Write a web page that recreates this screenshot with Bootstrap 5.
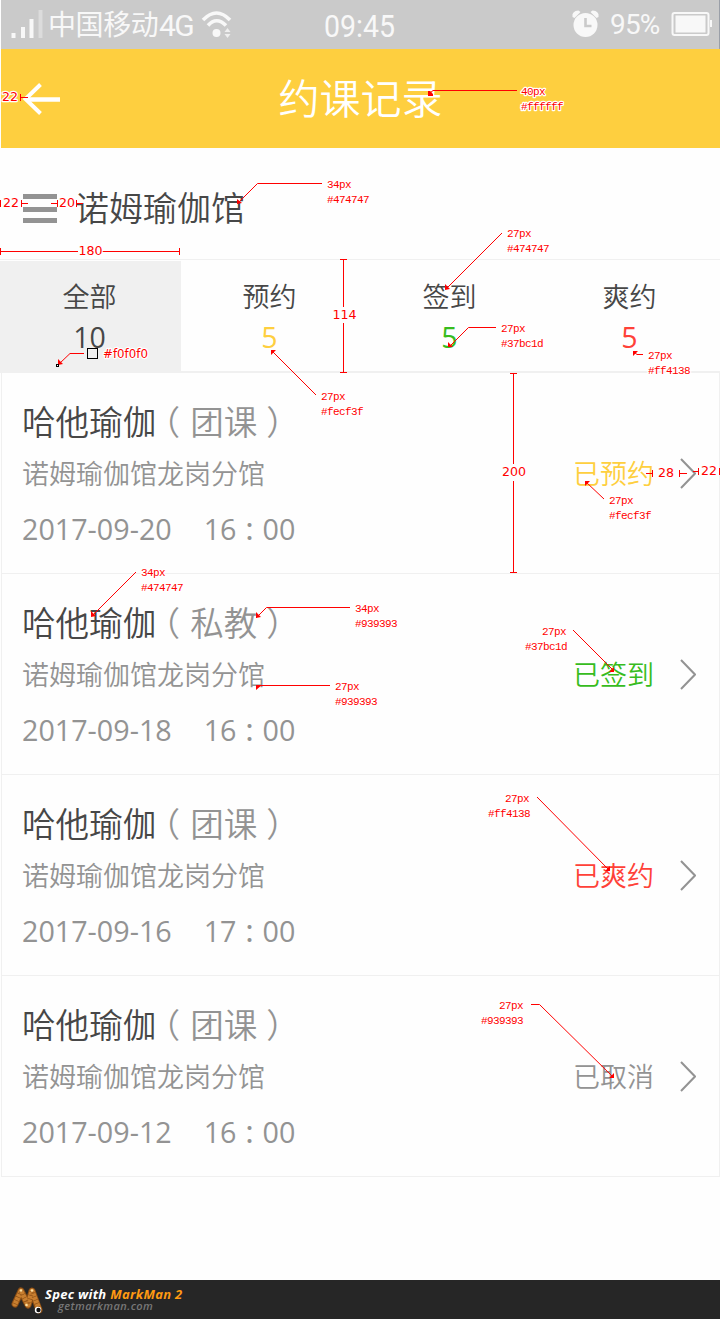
<!DOCTYPE html>
<html lang="zh-CN">
<head>
<meta charset="utf-8">
<meta name="viewport" content="width=device-width, initial-scale=1">
<title>约课记录</title>
<link href="https://cdn.jsdelivr.net/npm/bootstrap@5.3.0/dist/css/bootstrap.min.css" rel="stylesheet">
<style>
body{font-family:"Open Sans","Noto Sans CJK SC",sans-serif;font-weight:350;color:#474747;background:#fefefe;width:720px;height:1319px;overflow:hidden}
.screen{height:1319px}
.statusbar{height:49px;background:#cacaca;color:#f8f8f8;margin-left:1px;border-right:1px solid #9a9fa8;font-family:Roboto,"Noto Sans CJK SC",sans-serif;font-weight:400}
.statusbar svg{display:block;flex:none}
.carrier{font-size:28px;line-height:51px;width:111px;letter-spacing:-.4px;white-space:nowrap}
.net{font-size:30px;line-height:51px;width:40px;letter-spacing:-1.6px}
.clock{font-size:31px;line-height:53px;transform:scaleX(.92);transform-origin:0 0;width:80px}
.batt{font-size:28px;line-height:49px;width:60px;letter-spacing:-.8px}
.titlebar{height:99px;background:#fecf3f;color:#fff;margin-left:1px}
.titlebar h1{font-size:41px;line-height:99px;font-weight:350;flex:1;text-align:center;padding-right:60px}
.store{height:111px;padding:11px 0 0 23px}
.store h2{font-size:34px;line-height:98px;font-weight:350;margin:0 0 2px 18px}
.bars{width:34px;margin-bottom:2px}
.bars i{display:block;height:5px;background:#939393}
.bars i:last-child{margin-top:-2px}
.tabs{height:114px;border-top:1px solid #f0f0f0;border-bottom:2px solid #f0f0f0;padding-top:1px}
.tab-item{padding:16px 1px 0 0;text-align:center;font-size:27px;line-height:40px}
.tab-item.on{background:#f0f0f0;box-shadow:1px 0 #f0f0f0}
.tab-item b{display:block;font-size:28.5px;line-height:40px;font-weight:400}
.c-yellow{color:#fecf3f}.c-green{color:#37bc1d}.c-red{color:#ff4138}.c-gray{color:#939393}
.records{margin-left:1px;border-left:1px solid #f0f0f0;border-right:1px solid #f0f0f0}
.record{height:201px;border-bottom:1px solid #f0f0f0;padding:24px 23px 0 20px}
.course{font-size:33.6px;line-height:50px;white-space:nowrap}
.par-l,.par-r{font-feature-settings:"halt"}
.par-l{margin:0 10px 0 7px}.par-r{margin-left:9px}
.branch{font-size:27px;line-height:40px;margin-top:7px;color:#939393}
.when{font-size:28.7px;line-height:40px;margin-top:15px;color:#939393;font-weight:400;gap:32px}
.when em{font:400 26px/1 "Noto Sans CJK TC",sans-serif;vertical-align:-1px}
.state{font-size:27px;line-height:40px;margin-top:81px}
.state svg{margin-left:26px}
.side{margin-top:-24px;height:200px}
.maker{height:39px;margin-top:103px;background:#262626;font-family:"Open Sans",sans-serif;font-style:italic;font-weight:700;padding:0 0 0 11px}
.maker p{font-size:13px;line-height:14px;color:#fff;letter-spacing:.3px}
.maker p span{color:#ff9a12}
.maker small{font-size:11px;line-height:11px;color:#777;margin-left:13px;font-weight:600;letter-spacing:.45px;margin-top:-1px}
.maker-text{padding-top:7px}
.notes{left:0;top:0;pointer-events:none}
.notes text{fill:#f00;paint-order:stroke;stroke:#fff;stroke-width:2.4px;stroke-linejoin:round}
.spec{font:11px "Liberation Mono",monospace;letter-spacing:-.6px}
.size{font:12.6px "DejaVu Sans",sans-serif}
</style>
</head>
<body>
<div class="screen position-relative">
  <div class="statusbar d-flex">
    <svg width="47" height="49" fill="#f8f8f8"><rect x="10.500" y="33" width="4" height="5"/><rect x="20" y="27" width="4" height="11"/><rect x="28.500" y="19" width="4" height="19"/><rect x="37.500" y="10" width="4" height="28" opacity=".4"/></svg>
    <span class="carrier">中国移动</span><span class="net">4G</span>
    <svg width="125" height="49" fill="none" stroke="#f8f8f8" stroke-width="3.600"><path d="M4 20Q17.500 6 31 20M9 25.500Q17.500 16 27 25.500"/><circle cx="17.500" cy="33" r="4" fill="#f8f8f8" stroke="none"/><path d="M25.500 32l3-4 3 4zM25.500 34l3 4 3-4z" fill="#f8f8f8" stroke="none" opacity=".8"/></svg>
    <span class="clock">09:45</span>
    <svg width="206" height="49"><g transform="translate(167.500 0)" fill="#f8f8f8"><path d="M1 17Q0 11 7 10.500L9 12 3 18zM27 17Q28 11 21 10.500L19 12 25 18z"/><circle cx="14" cy="25" r="12"/><path d="M14 18v8h6" fill="none" stroke="#cacaca" stroke-width="2.600"/></g></svg>
    <span class="batt">95%</span>
    <svg width="48" height="49"><rect x="2.500" y="13" width="36" height="22" rx="2" fill="none" stroke="#f8f8f8" stroke-width="2"/><rect x="5.500" y="15.500" width="30" height="17" fill="#f8f8f8"/><path d="M40 20h2v7h-2z" fill="#f8f8f8"/></svg>
  </div>

  <header class="titlebar d-flex">
    <svg width="60" height="99" fill="none" stroke="#fff" stroke-width="4"><path d="M39.500 35.500L24.500 50 39.500 64.500"/><path d="M25 50.500H59" stroke-width="4.600"/></svg>
    <h1 class="m-0">约课记录</h1>
  </header>

  <section class="store d-flex align-items-center">
    <div class="bars d-flex flex-column gap-2"><i></i><i></i><i></i></div>
    <h2>诺姆瑜伽馆</h2>
  </section>

  <nav class="tabs d-flex">
    <div class="tab-item col-3 on">全部<b>10</b></div>
    <div class="tab-item col-3">预约<b class="c-yellow">5</b></div>
    <div class="tab-item col-3">签到<b class="c-green">5</b></div>
    <div class="tab-item col-3">爽约<b class="c-red">5</b></div>
  </nav>

  <main class="records">
    <article class="record d-flex justify-content-between">
      <div><div class="course">哈他瑜伽<span class="c-gray"><span class="par-l">（</span>团课<span class="par-r">）</span></span></div>
        <div class="branch">诺姆瑜伽馆龙岗分馆</div><div class="when d-flex"><span>2017-09-20</span><span>16<em>：</em>00</span></div></div>
      <div class="side d-flex align-items-start"><div class="state c-yellow d-flex align-items-center">已预约<svg width="16" height="32" fill="none" stroke="#939393" stroke-width="2"><path d="M1 1L15 15.500 1 30"/></svg></div></div>
    </article>
    <article class="record d-flex justify-content-between">
      <div><div class="course">哈他瑜伽<span class="c-gray"><span class="par-l">（</span>私教<span class="par-r">）</span></span></div>
        <div class="branch">诺姆瑜伽馆龙岗分馆</div><div class="when d-flex"><span>2017-09-18</span><span>16<em>：</em>00</span></div></div>
      <div class="side d-flex align-items-start"><div class="state c-green d-flex align-items-center">已签到<svg width="16" height="32" fill="none" stroke="#939393" stroke-width="2"><path d="M1 1L15 15.500 1 30"/></svg></div></div>
    </article>
    <article class="record d-flex justify-content-between">
      <div><div class="course">哈他瑜伽<span class="c-gray"><span class="par-l">（</span>团课<span class="par-r">）</span></span></div>
        <div class="branch">诺姆瑜伽馆龙岗分馆</div><div class="when d-flex"><span>2017-09-16</span><span>17<em>：</em>00</span></div></div>
      <div class="side d-flex align-items-start"><div class="state c-red d-flex align-items-center">已爽约<svg width="16" height="32" fill="none" stroke="#939393" stroke-width="2"><path d="M1 1L15 15.500 1 30"/></svg></div></div>
    </article>
    <article class="record d-flex justify-content-between">
      <div><div class="course">哈他瑜伽<span class="c-gray"><span class="par-l">（</span>团课<span class="par-r">）</span></span></div>
        <div class="branch">诺姆瑜伽馆龙岗分馆</div><div class="when d-flex"><span>2017-09-12</span><span>16<em>：</em>00</span></div></div>
      <div class="side d-flex align-items-start"><div class="state c-gray d-flex align-items-center">已取消<svg width="16" height="32" fill="none" stroke="#939393" stroke-width="2"><path d="M1 1L15 15.500 1 30"/></svg></div></div>
    </article>
  </main>

  <footer class="maker d-flex">
    <svg width="34" height="39" fill="none" stroke-linecap="round" stroke-linejoin="round"><path d="M4 24L10 11 17 25 21 11 28 30" stroke="#8a4d14" stroke-width="7"/><path d="M4 24L10 11 17 25 21 11 28 29" stroke="#c87f30" stroke-width="5"/><path d="M4 24L10 11 17 25 21 11 28 29" stroke="#8a4d14" stroke-width="5" stroke-dasharray=".6 3" stroke-linecap="butt"/><circle cx="10" cy="10.500" r="1.300" fill="#ffe0a0"/><circle cx="21" cy="10.500" r="1.300" fill="#ffe0a0"/><circle cx="15.500" cy="25" r="1.300" fill="#ffe0a0"/><circle cx="27" cy="30" r="3.200" fill="#fff"/><circle cx="27.500" cy="30" r="2.200" fill="#111"/></svg>
    <div class="maker-text d-flex flex-column"><p class="m-0">Spec with <span>MarkMan 2</span></p><small>getmarkman.com</small></div>
  </footer>

  <!-- design annotations laid over the screen -->
  <svg class="notes position-absolute" width="720" height="1319" viewBox="0 0 720 1319">
    <g fill="none" stroke="#f00" stroke-width="1">
      <path d="M517 90.500H433L429 94M322 183.500H257.500L238 203M502 233L446 289M496 327.500H468.500L449 347M643 354.500H637L634 352M316 395L272 351M604 499L586 482M136 572L92 616M350 607.500H266.500L256 618M330 685.500H257M573 630L613 670M537 797L609 870M531 1004.500H539.500L613 1077M84 353.500H70L59 364"/>
      <path d="M20.500 94v7M20 97.500h8M.5 200v7M21.500 200v7M22 203.500h6M51 203.500h6M57.500 200v7M76.500 200v7M77 203.500h6M.5 248v7M0 251.500H78M102 251.500h78M179.500 248v7M340 259.500h7M343.500 260v47M343.500 323v50M340 372.500h7M510 373.500h7M513.500 374v90M513.500 481v92M510 572.500h7M646 473.500h6M652.500 470v7M679.500 470v7M680 473.500h7M693 471.500h6M698.500 468v7M719.500 468v7"/>
    </g>
    <g fill="#f00">
      <path d="M428 91h2l3 3v2h-5zM237 204v-5l5 4zM445 290v-6l5 5zM448 347v-5l5 5zM633 351h5l-5 5zM271 350h5l-5 5zM585 481h5l-5 5zM91 617v-6l5 5zM256 618v-6l5 5zM256 685h6l-6 5zM614 672h-5l5-5zM610 871h-5l5-5zM614 1078h-5l5-5zM58 365v-6l5 5z"/>
    </g>
    <rect x="87.500" y="348.500" width="10" height="10" fill="#f0f0f0" stroke="#000"/><rect x="56.500" y="364.500" width="2" height="2" fill="#fff" stroke="#000"/>
    <g class="spec">
      <text x="521" y="95">40px</text><text x="521" y="110">#ffffff</text>
      <text x="327" y="188">34px</text><text x="327" y="203">#474747</text>
      <text x="507" y="237">27px</text><text x="507" y="252">#474747</text>
      <text x="501" y="332">27px</text><text x="501" y="347">#37bc1d</text>
      <text x="648" y="359">27px</text><text x="648" y="374">#ff4138</text>
      <text x="321" y="400">27px</text><text x="321" y="415">#fecf3f</text>
      <text x="609" y="504">27px</text><text x="609" y="519">#fecf3f</text>
      <text x="141" y="576">34px</text><text x="141" y="591">#474747</text>
      <text x="355" y="612">34px</text><text x="355" y="627">#939393</text>
      <text x="335" y="690">27px</text><text x="335" y="705">#939393</text>
      <text x="542" y="635">27px</text><text x="525" y="650">#37bc1d</text>
      <text x="505" y="802">27px</text><text x="488" y="817">#ff4138</text>
      <text x="499" y="1009">27px</text><text x="481" y="1024">#939393</text>
    </g>
    <g class="size">
      <text x="2" y="101">22</text><text x="3" y="207">22</text><text x="59" y="207">20</text><text x="78.500" y="255">180</text>
      <text x="332.500" y="319">114</text><text x="502" y="476">200</text><text x="658" y="477">28</text><text x="701" y="475">22</text>
      <text x="103" y="358" textLength="45" lengthAdjust="spacingAndGlyphs">#f0f0f0</text>
    </g>
  </svg>
</div>
<script src="https://cdn.jsdelivr.net/npm/bootstrap@5.3.0/dist/js/bootstrap.bundle.min.js"></script>
</body>
</html>
